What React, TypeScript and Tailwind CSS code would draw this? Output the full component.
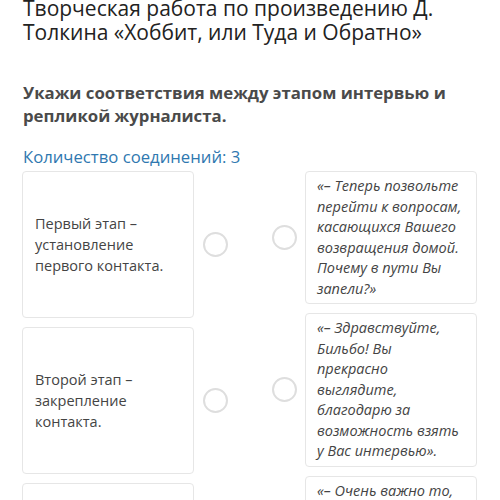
const LEFT = [
  'Первый этап – установление первого контакта.',
  'Второй этап – закрепление контакта.',
  'Третий этап – завершение интервью.',
]

const RIGHT = [
  '«– Теперь позвольте перейти к вопросам, касающихся Вашего возвращения домой. Почему в пути Вы запели?»',
  '«– Здравствуйте, Бильбо! Вы прекрасно выглядите, благодарю за возможность взять у Вас интервью».',
  '«– Очень важно то, что Вы рассказали. Спасибо за интервью!»',
]

function Dot() {
  return <div className="w-[25px] h-[25px] shrink-0 rounded-full border-[2.5px] border-[#dedede] bg-white" />
}

export default function App() {
  return (
    <div
      className="w-[500px] h-[500px] overflow-hidden bg-white px-[23px]"
      style={{ fontFamily: '"Open Sans", "Noto Sans", sans-serif' }}
    >
      <h1 className="-mt-[4px] text-[21px] leading-[24px] text-[#222]">
        Творческая работа по произведению Д. Толкина «Хоббит, или Туда и Обратно»
      </h1>

      <h2 className="mt-[37px] text-[16.8px] leading-[23px] font-bold text-[#4a4a4a]">
        Укажи соответствия между этапом интервью и репликой журналиста.
      </h2>

      <p className="mt-[18px] text-[16.7px] leading-[24px] text-[#2f78b0]">Количество соединений: 3</p>

      <div className="mt-[2px] flex -ml-[1px]">
        <div className="flex flex-col gap-[9px]">
          {LEFT.map((t, i) => (
            <div key={i} className="flex items-center gap-[9px]">
              <div className="w-[172px] h-[147px] shrink-0 flex items-center rounded-[4px] border border-[#e6e6e6] bg-white pl-[12px] pr-[8px]">
                <p className="text-[14.5px] leading-[21px] text-[#444]">{t}</p>
              </div>
              <Dot />
            </div>
          ))}
        </div>

        <div className="ml-[44px] flex flex-col gap-[9px]">
          {RIGHT.map((t, i) => (
            <div key={i} className="flex items-center gap-[8px]">
              <Dot />
              <div className="w-[172px] shrink-0 rounded-[4px] border border-[#e6e6e6] bg-white pl-[11px] pr-[12px] py-[4px]">
                <p className="text-[14.5px] leading-[20.5px] italic text-[#444]">{t}</p>
              </div>
            </div>
          ))}
        </div>
      </div>
    </div>
  )
}
